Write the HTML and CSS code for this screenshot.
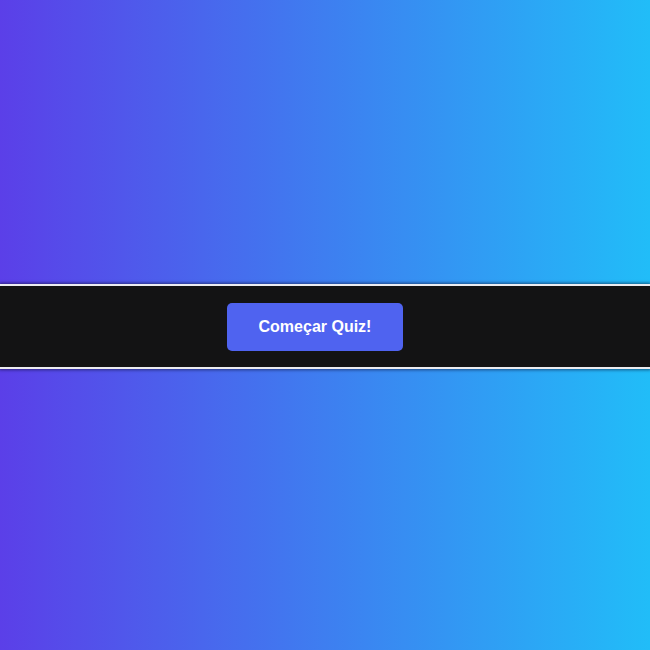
FILE: index.html
```html
<!DOCTYPE html>
<html lang="pt">
<head>
<meta charset="utf-8">
<title>Quiz</title>
<link rel="stylesheet" href="styles.css">
</head>
<body>
<main class="page">
  <section class="bar">
    <button class="start-btn">Começar Quiz!</button>
  </section>
</main>
</body>
</html>
```

FILE: styles.css
```css
html, body {
  margin: 0;
  padding: 0;
}
body {
  font-family: "Liberation Sans", Arial, sans-serif;
}
.page {
  height: 650px;
  background: linear-gradient(to right, #5b3fe8 0%, #21bdf8 100%);
  display: flex;
  flex-direction: column;
  justify-content: center;
  padding-top: 3px;
  box-sizing: border-box;
}
.bar {
  background: #131314;
  border-top: 2px solid #ececf0;
  border-bottom: 2px solid #ececf0;
  box-shadow: 0 0 3px 1px rgba(10, 10, 40, 0.55);
  padding: 17px 20px 16px 0;
  display: flex;
  justify-content: center;
}
.start-btn {
  background: #4f63f0;
  color: #ffffff;
  border: none;
  border-radius: 5px;
  font-family: "Liberation Sans", Arial, sans-serif;
  font-weight: bold;
  font-size: 16px;
  line-height: 18px;
  padding: 15px 31px;
  width: 176px;
  cursor: pointer;
}
```
